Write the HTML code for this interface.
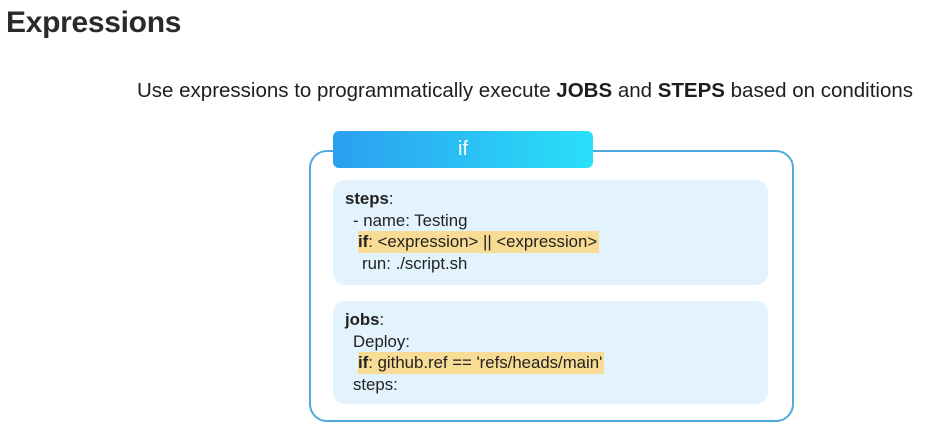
<!DOCTYPE html>
<html><head><style>
body{margin:0;width:950px;height:435px;background:#fff;position:relative;overflow:hidden;font-family:"Liberation Sans",sans-serif;color:#222;}
.t{position:absolute;left:6px;top:6px;font-size:30px;font-weight:bold;color:#2a2a2a;letter-spacing:-0.3px}
.s{position:absolute;left:137px;top:79px;font-size:20.5px;white-space:nowrap;color:#1e1e1e}
.outer{position:absolute;left:309px;top:150px;width:481px;height:268px;border:2px solid #4fa9dc;border-radius:18px}
.tab{position:absolute;left:333px;top:131px;width:260px;height:37px;border-radius:6px;background:linear-gradient(90deg,#2b9ff0,#2ae0f8);color:#fff;font-size:20px;text-align:center;line-height:37px}
.box{position:absolute;left:333px;width:435px;background:#e3f3fd;border-radius:12px;font-size:16.8px;line-height:21.5px;padding-top:8px;box-sizing:border-box}
.box div{white-space:nowrap;height:21.5px}
.hl{background:#f8dc95;display:inline-block;padding-right:2px}
</style></head><body>
<div class="t">Expressions</div>
<div class="s">Use expressions to programmatically execute <b>JOBS</b> and <b>STEPS</b> based on conditions</div>
<div class="outer"></div>
<div class="tab">if</div>
<div class="box" style="top:180px;height:105px">
<div style="padding-left:12px"><b>steps</b>:</div>
<div style="padding-left:20px">- name: Testing</div>
<div style="padding-left:25px"><span class="hl"><b>if</b>: &lt;expression&gt; || &lt;expression&gt;</span></div>
<div style="padding-left:29px">run: ./script.sh</div>
</div>
<div class="box" style="top:301px;height:103px">
<div style="padding-left:12px"><b>jobs</b>:</div>
<div style="padding-left:20px">Deploy:</div>
<div style="padding-left:25px"><span class="hl"><b>if</b>: github.ref == 'refs/heads/main'</span></div>
<div style="padding-left:20px">steps:</div>
</div>
</body></html>
